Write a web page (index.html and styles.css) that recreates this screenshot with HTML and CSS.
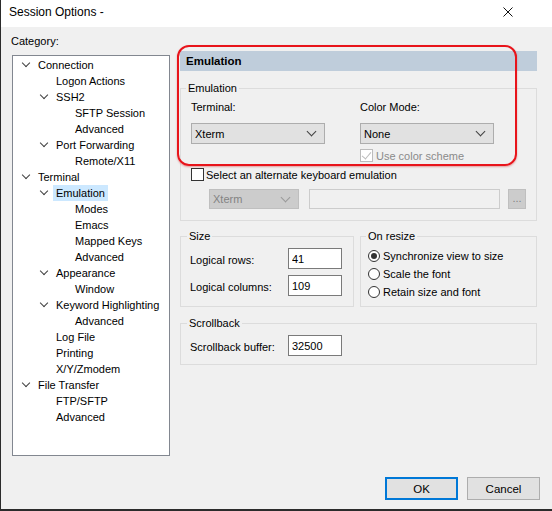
FILE: index.html
```html
<!DOCTYPE html>
<html lang="en">
<head>
    <meta charset="UTF-8">
    <title>Session Options</title>
    <link rel="stylesheet" href="styles.css">
</head>
<body>
    <div class="window">
        <div class="titlebar">
            <span class="title">Session Options -</span>
            <svg class="close" width="10" height="10" viewBox="0 0 10 10">
                <path d="M0.5 0.5 L9.5 9.5 M9.5 0.5 L0.5 9.5" stroke="#111" stroke-width="1" fill="none"/>
            </svg>
        </div>

        <div class="content">
            <div class="category">
                <div class="cat-label">Category:</div>
                <div class="tree">
                    <div class="node l0"><span class="twisty open"></span><span class="text">Connection</span></div>
                    <div class="node l1"><span class="twisty"></span><span class="text">Logon Actions</span></div>
                    <div class="node l1"><span class="twisty open"></span><span class="text">SSH2</span></div>
                    <div class="node l2"><span class="twisty"></span><span class="text">SFTP Session</span></div>
                    <div class="node l2"><span class="twisty"></span><span class="text">Advanced</span></div>
                    <div class="node l1"><span class="twisty open"></span><span class="text">Port Forwarding</span></div>
                    <div class="node l2"><span class="twisty"></span><span class="text">Remote/X11</span></div>
                    <div class="node l0"><span class="twisty open"></span><span class="text">Terminal</span></div>
                    <div class="node l1"><span class="twisty open"></span><span class="text selected">Emulation</span></div>
                    <div class="node l2"><span class="twisty"></span><span class="text">Modes</span></div>
                    <div class="node l2"><span class="twisty"></span><span class="text">Emacs</span></div>
                    <div class="node l2"><span class="twisty"></span><span class="text">Mapped Keys</span></div>
                    <div class="node l2"><span class="twisty"></span><span class="text">Advanced</span></div>
                    <div class="node l1"><span class="twisty open"></span><span class="text">Appearance</span></div>
                    <div class="node l2"><span class="twisty"></span><span class="text">Window</span></div>
                    <div class="node l1"><span class="twisty open"></span><span class="text">Keyword Highlighting</span></div>
                    <div class="node l2"><span class="twisty"></span><span class="text">Advanced</span></div>
                    <div class="node l1"><span class="twisty"></span><span class="text">Log File</span></div>
                    <div class="node l1"><span class="twisty"></span><span class="text">Printing</span></div>
                    <div class="node l1"><span class="twisty"></span><span class="text">X/Y/Zmodem</span></div>
                    <div class="node l0"><span class="twisty open"></span><span class="text">File Transfer</span></div>
                    <div class="node l1"><span class="twisty"></span><span class="text">FTP/SFTP</span></div>
                    <div class="node l1"><span class="twisty"></span><span class="text">Advanced</span></div>
                </div>
            </div>

            <div class="panel">
                <div class="panel-header">Emulation</div>

                <fieldset class="group emu">
                    <legend>Emulation</legend>
                    <div class="emu-grid">
                        <div class="field-label">Terminal:</div>
                        <div class="field-label">Color Mode:</div>
                        <div class="select"><span>Xterm</span><span class="arrow"></span></div>
                        <div class="select"><span>None</span><span class="arrow"></span></div>
                        <div></div>
                        <div class="check disabled"><span class="box checked"></span><span>Use color scheme</span></div>
                    </div>
                    <div class="check alt"><span class="box"></span><span>Select an alternate keyboard emulation</span></div>
                    <div class="alt-row">
                        <div class="select small disabled"><span>Xterm</span><span class="arrow"></span></div>
                        <div class="textbox disabled"></div>
                        <div class="dots disabled">...</div>
                    </div>
                </fieldset>

                <div class="group-row">
                    <fieldset class="group size">
                        <legend>Size</legend>
                        <div class="form-row">
                            <label>Logical rows:</label>
                            <input type="text" value="41">
                        </div>
                        <div class="form-row">
                            <label>Logical columns:</label>
                            <input type="text" value="109">
                        </div>
                    </fieldset>
                    <fieldset class="group resize">
                        <legend>On resize</legend>
                        <div class="radio"><span class="dot checked"></span><span>Synchronize view to size</span></div>
                        <div class="radio"><span class="dot"></span><span>Scale the font</span></div>
                        <div class="radio"><span class="dot"></span><span>Retain size and font</span></div>
                    </fieldset>
                </div>

                <fieldset class="group scrollback">
                    <legend>Scrollback</legend>
                    <div class="form-row">
                        <label>Scrollback buffer:</label>
                        <input type="text" value="32500">
                    </div>
                </fieldset>
            </div>
        </div>

        <div class="buttons">
            <button class="default">OK</button>
            <button>Cancel</button>
        </div>

        <div class="highlight"></div>
    </div>
</body>
</html>
```

FILE: styles.css
```css
body {
    margin: 0;
    font-family: "Liberation Sans", Arial, sans-serif;
    font-size: 11px;
    color: #000;
    background: #f0f0f0;
}
.window {
    position: relative;
    width: 552px;
    height: 511px;
    box-sizing: border-box;
    border-left: 1px solid #2b2b2b;
    border-bottom: 2px solid #2b2b2b;
    background: #f0f0f0;
    display: flex;
    flex-direction: column;
}
.titlebar {
    height: 27px;
    background: #fff;
    display: flex;
    align-items: center;
    justify-content: space-between;
    padding: 0 38px 3px 8px;
    box-sizing: border-box;
}
.title {
    font-size: 12px;
}
.close {
    display: block;
    margin-top: -1px;
    margin-right: 1px;
}
.content {
    flex: 1;
    display: flex;
    padding: 7px 0 0 11px;
}
.category {
    width: 158px;
}
.cat-label {
    height: 15px;
    line-height: 15px;
    margin-bottom: 6px;
    margin-left: -1px;
}
.tree {
    height: 401px;
    box-sizing: border-box;
    border: 1px solid #828790;
    background: #fff;
    padding-top: 1px;
}
.node {
    height: 16px;
    line-height: 16px;
    display: flex;
    align-items: center;
    white-space: nowrap;
}
.l0 { padding-left: 9px; }
.l1 { padding-left: 27px; }
.l2 { padding-left: 46px; }
.twisty {
    width: 16px;
    height: 16px;
    flex: none;
    position: relative;
}
.twisty.open::before {
    content: "";
    position: absolute;
    left: 1px;
    top: 3px;
    width: 5px;
    height: 5px;
    border-right: 1.3px solid #404040;
    border-bottom: 1.3px solid #404040;
    transform: rotate(45deg);
}
.text.selected {
    background: #cce8ff;
    padding: 0 3px;
    margin-left: -3px;
}
.panel {
    width: 357px;
    margin-left: 10px;
}
.panel-header {
    margin-top: 17px;
    height: 20px;
    line-height: 20px;
    background: #bfcddb;
    font-weight: bold;
    font-size: 11.5px;
    padding-left: 6px;
}
.group {
    margin: 0;
    border: 1px solid #dcdcdc;
    padding: 0 9px;
    min-width: 0;
}
.group legend {
    padding: 0 2px;
    line-height: 15px;
}
.emu {
    margin-top: 10px;
    padding: 4px 10px 11px 10px;
}
.emu legend {
    margin-left: -5px;
}
.emu-grid {
    display: grid;
    grid-template-columns: 169px 1fr;
    row-gap: 0;
}
.field-label {
    line-height: 15px;
    height: 15px;
}
.select {
    margin-top: 8px;
    width: 134px;
    height: 21px;
    box-sizing: border-box;
    border: 1px solid #adadad;
    background: #e1e1e1;
    display: flex;
    align-items: center;
    justify-content: space-between;
    padding: 0 9px 0 3px;
}
.arrow {
    width: 6px;
    height: 6px;
    border-right: 1px solid #404040;
    border-bottom: 1px solid #404040;
    transform: rotate(45deg);
    margin-top: -4px;
}
.check {
    display: flex;
    align-items: center;
    height: 15px;
    margin-top: 4px;
}
.box {
    width: 13px;
    height: 13px;
    box-sizing: border-box;
    border: 1px solid #333;
    background: #fff;
    margin-right: 3px;
    position: relative;
}
.box.checked::after {
    content: "";
    position: absolute;
    left: 3px;
    top: 0px;
    width: 4px;
    height: 8px;
    border-right: 1.5px solid #bcbcbc;
    border-bottom: 1.5px solid #bcbcbc;
    transform: rotate(40deg);
}
.check.disabled {
    color: #8a8a8a;
}
.check.disabled .box {
    border-color: #bcbcbc;
}
.check.alt {
    margin-top: 4px;
}
.check.alt .box {
    margin-right: 2px;
}
.alt-row {
    display: flex;
    align-items: center;
    margin-top: 7px;
    margin-left: 18px;
    height: 20px;
}
.select.small {
    margin-top: 0;
    width: 90px;
    height: 20px;
}
.select.disabled {
    background: #cccccc;
    border-color: #bfbfbf;
    color: #838383;
}
.select.disabled .arrow {
    border-color: #9a9a9a;
}
.textbox.disabled {
    width: 191px;
    height: 20px;
    box-sizing: border-box;
    border: 1px solid #cccccc;
    background: #f0f0f0;
    margin-left: 10px;
}
.dots {
    width: 18px;
    height: 20px;
    box-sizing: border-box;
    margin-left: 8px;
    border: 1px solid #bfbfbf;
    background: #cccccc;
    color: #838383;
    text-align: center;
    line-height: 16px;
}
.group-row {
    display: flex;
    gap: 6px;
    margin-top: 8px;
}
.size {
    width: 174px;
    box-sizing: border-box;
    padding: 4px 9px 10px 9px;
}
.size legend,
.scrollback legend {
    margin-left: -3px;
}
.resize {
    flex: 1;
    padding: 3px 7px 4px 7px;
}
.resize legend {
    margin-left: -2px;
}
.form-row {
    display: flex;
    align-items: center;
    height: 21px;
}
.form-row + .form-row {
    margin-top: 6px;
}
.form-row label {
    width: 98px;
    padding-top: 3px;
}
.form-row input {
    width: 54px;
    height: 21px;
    box-sizing: border-box;
    border: 1px solid #7a7a7a;
    background: #fff;
    font: inherit;
    padding: 0 3px;
    margin: 0;
}
.radio {
    display: flex;
    align-items: center;
    height: 18px;
}
.dot {
    width: 12px;
    height: 12px;
    box-sizing: border-box;
    border: 1px solid #333;
    border-radius: 50%;
    background: #fff;
    margin-right: 3px;
    position: relative;
}
.dot.checked::after {
    content: "";
    position: absolute;
    left: 2px;
    top: 2px;
    width: 6px;
    height: 6px;
    border-radius: 50%;
    background: #333;
}
.scrollback {
    margin-top: 9px;
    padding: 4px 9px 8px 9px;
}
.buttons {
    display: flex;
    justify-content: flex-end;
    gap: 9px;
    padding: 0 12px 9px 0;
}
button {
    width: 73px;
    height: 23px;
    font: inherit;
    font-size: 11.5px;
    background: #e1e1e1;
    border: 1px solid #adadad;
    color: #000;
    padding: 0;
}
button.default {
    border: 2px solid #0078d7;
}
.highlight {
    position: absolute;
    left: 176px;
    top: 45px;
    width: 340px;
    height: 121px;
    box-sizing: border-box;
    border: 2px solid #e8141b;
    border-radius: 12px;
    box-shadow: 0 1px 2px rgba(200, 0, 0, 0.35);
}
```
